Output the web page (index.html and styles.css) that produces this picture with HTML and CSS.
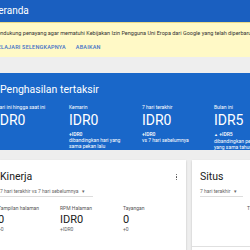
FILE: index.html
```html
<!DOCTYPE html>
<html lang="id">
<head>
<meta charset="utf-8">
<link rel="stylesheet" href="styles.css">
</head>
<body>
<header class="topbar"><h1 class="topbar-title">Beranda</h1></header>
<div class="notice">
  <p class="notice-text">Untuk mendukung penayang agar mematuhi Kebijakan Izin Pengguna Uni Eropa dari Google yang telah diperbarui</p>
  <div class="notice-actions">
    <a class="notice-link">PELAJARI SELENGKAPNYA</a>
    <a class="notice-link">ABAIKAN</a>
  </div>
</div>
<main class="content">
  <section class="earnings">
    <h2 class="earnings-title">Penghasilan tertaksir</h2>
    <div class="earnings-cols">
      <div class="ecol">
        <div class="elabel">Hari ini hingga saat ini</div>
        <div class="evalue">IDR0</div>
      </div>
      <div class="ecol">
        <div class="elabel">Kemarin</div>
        <div class="evalue">IDR0</div>
        <div class="ediff">+IDR0</div>
        <div class="enote">dibandingkan hari yang sama pekan lalu</div>
      </div>
      <div class="ecol">
        <div class="elabel">7 hari terakhir</div>
        <div class="evalue">IDR0</div>
        <div class="ediff">+IDR0</div>
        <div class="enote">vs 7 hari sebelumnya</div>
      </div>
      <div class="ecol">
        <div class="elabel">Bulan ini</div>
        <div class="evalue">IDR5</div>
        <div class="ediff"><span class="up">▲</span> +IDR5</div>
        <div class="enote">dibandingkan periode yang sama tahun lalu</div>
      </div>
    </div>
  </section>
  <div class="cards">
    <section class="card perf">
      <div class="card-head">
        <h3 class="card-title">Kinerja</h3>
        <span class="kebab"><i></i><i></i><i></i></span>
      </div>
      <div class="select">7 hari terakhir vs 7 hari sebelumnya <span class="caret">▾</span></div>
      <div class="metrics">
        <div class="metric"><div class="mlabel">Tampilan halaman</div><div class="mvalue">0</div><div class="mdiff">+0</div></div>
        <div class="metric"><div class="mlabel">RPM Halaman</div><div class="mvalue">IDR0</div><div class="mdiff">+IDR0</div></div>
        <div class="metric"><div class="mlabel">Tayangan</div><div class="mvalue">0</div><div class="mdiff">+0</div></div>
      </div>
    </section>
    <section class="card sites">
      <h3 class="card-title">Situs</h3>
      <div class="select short">7 hari terakhir <span class="caret">▾</span></div>
      <div class="sites-head">Tidak</div>
      <div class="sites-rule"></div>
    </section>
  </div>
</main>
</body>
</html>
```

FILE: styles.css
```css
html, body {
  margin: 0;
  padding: 0;
}
body {
  width: 250px;
  height: 250px;
  overflow: hidden;
  background: #eeeeee;
  font-family: Roboto, "Noto Sans", sans-serif;
  color: #212121;
}
.topbar {
  height: 22px;
  background: #1a5fc0;
  display: flex;
  align-items: center;
}
.topbar-title {
  margin: 0 0 0 -8px;
  font-size: 10px;
  font-weight: 400;
  color: #ffffff;
  line-height: 22px;
}
.notice {
  background: #fff9c6;
  border-top: 1px solid #e8d98a;
  height: 34px;
  padding-top: 6px;
  box-sizing: border-box;
  height: 35px;
  white-space: nowrap;
}
.notice-text {
  margin: 0 0 0 -23px;
  font-size: 5.5px;
  line-height: 8px;
  color: #333333;
}
.notice-actions {
  margin: 6px 0 0 -6px;
  display: flex;
  gap: 10px;
}
.notice-link {
  font-size: 5.5px;
  line-height: 8px;
  font-weight: 500;
  color: #3d6fc7;
  letter-spacing: 0.2px;
}
.content {
  padding-top: 16px;
}
.earnings {
  background: #1967c9;
  color: #ffffff;
  height: 77px;
  padding-top: 10px;
  box-sizing: border-box;
  white-space: nowrap;
}
.earnings-title {
  margin: 0 0 0 0;
  font-size: 10.5px;
  font-weight: 400;
  line-height: 14px;
}
.earnings-cols {
  display: grid;
  grid-template-columns: 73px 73px 72px 72px;
  margin: 7px 0 0 -4px;
}
.elabel {
  font-size: 5px;
  line-height: 7px;
}
.evalue {
  font-size: 14px;
  line-height: 16px;
  margin-top: 1px;
}
.ediff {
  font-size: 5px;
  line-height: 6px;
  font-weight: 500;
  margin-top: 3px;
}
.enote {
  font-size: 5px;
  line-height: 6px;
  white-space: normal;
  width: 54px;
}
.up {
  font-size: 4px;
}
.cards {
  display: flex;
  gap: 6px;
  margin-top: 10px;
}
.card {
  background: #ffffff;
  box-shadow: 0 1px 2px rgba(0,0,0,0.2);
  height: 100px;
  box-sizing: border-box;
  padding-top: 10px;
}
.perf {
  width: 186px;
  margin-left: 0;
  padding-right: 9px;
}
.sites {
  flex: 1;
  padding-left: 8px;
  position: relative;
}
.card-head {
  display: flex;
  justify-content: space-between;
  align-items: center;
}
.card-title {
  margin: 0;
  font-size: 10.5px;
  font-weight: 400;
  line-height: 14px;
}
.kebab {
  display: flex;
  flex-direction: column;
  gap: 1px;
}
.kebab i {
  width: 1.5px;
  height: 1.5px;
  background: #444;
  border-radius: 50%;
}
.select {
  margin-top: 4px;
  font-size: 5px;
  line-height: 7px;
  color: #666666;
  width: 93px;
  border-bottom: 1px solid #dddddd;
  padding-bottom: 1px;
  white-space: nowrap;
}
.select.short {
  width: 43px;
}
.caret {
  font-size: 5px;
  margin-left: 2px;
}
.metrics {
  display: grid;
  grid-template-columns: 62px 63px 60px;
  margin: 8px 0 0 -2px;
  white-space: nowrap;
}
.mlabel {
  font-size: 5px;
  line-height: 7px;
  color: #555555;
}
.mvalue {
  font-size: 11px;
  line-height: 13px;
  margin-top: 1px;
}
.mdiff {
  font-size: 5px;
  line-height: 7px;
  color: #666666;
}
.sites-head {
  font-size: 5px;
  line-height: 7px;
  color: #555555;
  margin: 8px 0 0 47px;
  white-space: nowrap;
}
.sites-rule {
  border-top: 1px solid #e0e0e0;
  margin: 34px 0 0 -8px;
}
```
